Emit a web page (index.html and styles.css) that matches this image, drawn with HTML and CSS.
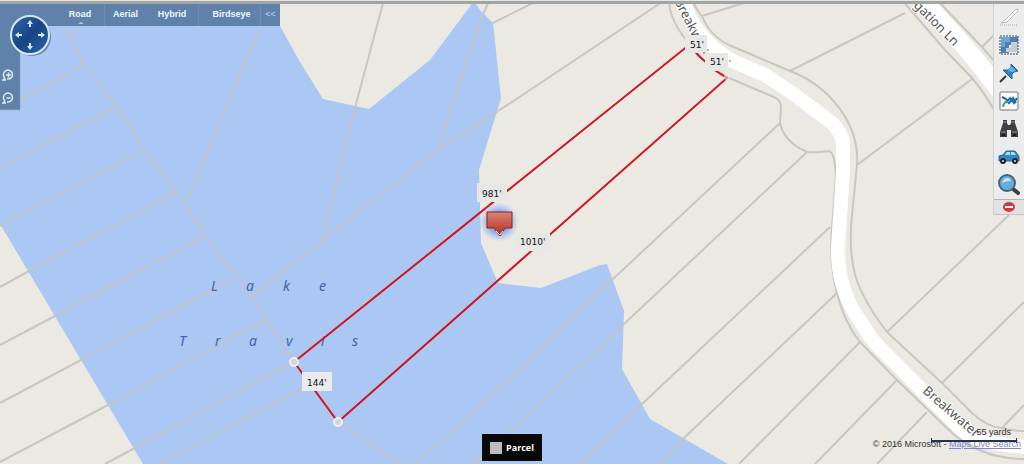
FILE: index.html
```html
<!doctype html>
<html lang="en">
  <head>
    <meta charset="utf-8">
    <title>Parcel map</title>
    <meta name="viewport" content="width=device-width, initial-scale=1">
    <link rel="stylesheet" href="styles.css">
  </head>
  <body>
    <main id="map">
      <svg class="canvas" viewBox="0 0 1024 464" preserveAspectRatio="xMidYMid slice" xmlns="http://www.w3.org/2000/svg">
        <defs>
          <linearGradient id="pin-fill" x1="0" y1="0" x2="0" y2="1">
            <stop offset="0" stop-color="#d98478" />
            <stop offset="1" stop-color="#b52a1c" />
          </linearGradient>
          <radialGradient id="pin-glow">
            <stop offset="0.5" stop-color="#7fa2f5" />
            <stop offset="1" stop-color="#a9c2f5" stop-opacity="0" />
          </radialGradient>
          <clipPath id="water-clip"><use href="#water" /></clipPath>
          <g id="lots">
            <path d="M64 26L84 65L118 107L143 148L183 201L205 236L252 296L267 322L295 362L338 422L402 464" />
            <path d="M75 36L80 26M84 65L20 101M118 106L0 168M142 151L0 226M177 192L29 271L0 287M206 236L55 316L0 345M232 280L81 360L0 403M265 320L108 405L0 462M290 364L133 449L105 464M302 389L160 464" />
            <path d="M259 30L187 201M383 3L355 108L323 240M252 296L320 243L432 154L495 113L512 102L665 0M488 3L480 22L438 148M493 23L535 2" />
            <path d="M780 123L613 279L512 377L415 464M807 152L624 324L512 430L473 464M830 227L641 405L579 464M837 293L685 437L659 464M860 342L739 464M897 380L815 464M927 412L877 464" />
            <path d="M702 16L747 2M790 71L905 13M857 165L972 79M887 332L1009 215M942 383L1024 302M1002 428L1024 405M982 47L994 35" />
          </g>
        </defs>

        <path id="water" class="water" d="M0 0H280V26L300 62L323 99L369 109L430 60L474 1L480 10L493 23L501 98L479 170L481 243L498 283L541 288L600 265L607 264L624 311L622 369L650 419L728 464H143L0 224Z" />
        <use href="#lots" class="lot" />
        <use href="#lots" class="lot lot-water" clip-path="url(#water-clip)" />

        <!-- road edges -->
        <path class="lot" d="M669 2Q670 16 679 30Q700 62 727 77L776 98Q781 101 781 107L780 123Q784 142 807 152Q815 153 829 151Q835 153 836 177L832 227Q829 262 837 293Q844 322 860 342L897 380L952 433Q966 445 979 450Q1000 459 1024 459" />
        <path class="lot" d="M693 2Q698 12 702 16Q710 36 729 45L790 71C830 86 860 125 857 165L852 215C847 265 855 290 887 332L942 383L972 413Q987 427 1002 428Q1012 431 1024 431" />
        <path class="lot" d="M902 0L945 50L972 78Q984 92 994 110M937 0L982 47L994 61" />
        <path class="road" d="M683 -2Q688 24 712 46Q726 58 735 62L765 75L795 95L832 123Q842 133 843 143V173L838 247Q837 290 861 322Q870 338 879 347L929 397L962 430Q978 444 1028 447" />
        <path class="road road-wide" d="M920 -4L963 45Q982 66 1004 97" />

        <text class="street" transform="translate(674 1) rotate(63)">Breakw</text>
        <text class="street" transform="translate(913 6) rotate(45)">gation Ln</text>
        <text class="street" transform="translate(922 392) rotate(41)">Breakwater</text>
        <text class="lake" x="211 246 283 319" y="291">Lake</text>
        <text class="lake" x="179 215 249 286 321 352" y="346">Travis</text>

        <!-- measured parcel -->
        <path class="parcel" d="M294 362L689 45L700 57L716 71L727 78L338 422Z" />
        <circle class="node" cx="294" cy="362" r="4" />
        <circle class="node" cx="338" cy="422" r="4" />
        <circle class="node node-faint" cx="727" cy="77" r="2" />

        <path class="tag" d="M685 35H707V53H685Z" />
        <text class="feet" x="690" y="48">51'</text>
        <path class="tag" d="M705 53H728V71H705Z" />
        <text class="feet" x="710" y="65">51'</text>
        <path class="speck" d="M703 53H705M708 49V51M729 61H731" />
        <path class="tag" d="M477 183H507V202H477Z" />
        <text class="feet" x="482" y="197">981'</text>
        <path class="tag" d="M515 232H550V251H515Z" />
        <text class="feet" x="520" y="245">1010'</text>
        <path class="tag tag-solid" d="M302 372H332V391H302Z" />
        <text class="feet" x="307" y="386">144'</text>

        <circle cx="499" cy="222" r="20" fill="url(#pin-glow)" />
        <path d="M487 212H512V228H505L500 236L494 228H487Z" fill="url(#pin-fill)" stroke="#8f2015" />
        <path d="M496 231L500 235L503 231" fill="none" stroke="#fff" />
      </svg>

      <nav class="modes">
        <button class="current">Road</button>
        <button class="aerial divided">Aerial</button>
        <button class="hybrid">Hybrid</button>
        <button class="birdseye divided">Birdseye</button>
        <button class="fold divided" aria-label="Collapse">&lt;&lt;</button>
      </nav>

      <div class="zoombar">
        <button aria-label="Zoom in">
          <svg class="glyph" viewBox="0 0 24 24"><path d="M6 18L2 22H8M6 18A9 9 0 1 1 10 20M13 7V17M8 12H18" /></svg>
        </button>
        <button aria-label="Zoom out">
          <svg class="glyph" viewBox="0 0 24 24"><path d="M6 18L2 22H8M6 18A9 9 0 1 1 10 20M9 12H17" /></svg>
        </button>
      </div>

      <button class="compass" aria-label="Pan">
        <svg viewBox="0 0 42 42">
          <defs>
            <linearGradient id="dial" x1="0" y1="0" x2="1" y2="1">
              <stop offset="0" stop-color="#3566ad" />
              <stop offset="0.5" stop-color="#174486" />
              <stop offset="1" stop-color="#2d66ae" />
            </linearGradient>
          </defs>
          <circle cx="23" cy="23" r="19" fill="#38567e" opacity="0.6" />
          <circle cx="21" cy="21" r="19" fill="url(#dial)" stroke="#d5e8f8" stroke-width="2" />
          <path d="M21 6L24 10H22V13H20V10H18ZM21 36L24 32H22V29H20V32H18ZM6 21L10 18V20H13V22H10V24ZM36 21L32 18V20H29V22H32V24Z" fill="#d2e9fb" />
        </svg>
      </button>

      <aside class="tools">
        <button aria-label="Draw line">
          <svg viewBox="0 0 22 22">
            <path d="M3 17L7 14L15 6Q17 3 20 3Q20 6 17 8L9 16Z" fill="#fff" stroke="#b9b9b9" />
            <path d="M2 19H20" stroke="#aaa" stroke-dasharray="1 1" />
          </svg>
        </button>
        <button aria-label="Select area">
          <svg viewBox="0 0 22 22">
            <path d="M3 3H20V11H11V19H3Z" fill="#4b80b5" />
            <path d="M3 3H12V8H7V13H3Z" fill="#71a3d2" />
            <path d="M13 8H20V18H8V14H13Z" fill="#c9cbd3" />
            <path d="M2 2H20V20H2Z" fill="none" stroke="#34495f" stroke-dasharray="2 1" />
          </svg>
        </button>
        <button aria-label="Pushpin">
          <svg viewBox="0 0 22 22">
            <path d="M8 14L2 20" stroke="#333" stroke-width="2" />
            <path d="M13 2L20 9L16 10L14 12L14 17L5 8L10 8L13 6Z" fill="#2b83c9" stroke="#1e659f" />
            <path d="M13 4L18 9L14 10L10 9Z" fill="#65b4e8" />
          </svg>
        </button>
        <button aria-label="Map layers">
          <svg viewBox="0 0 22 22">
            <rect x="2" y="2" width="18" height="18" rx="1" fill="#fafafa" stroke="#777" />
            <path d="M4 7L8 9L11 13L15 8L18 13M8 13L12 8L16 13L19 8" fill="none" stroke="#176da8" stroke-width="2" />
            <path d="M5 17Q6 11 10 12" fill="none" stroke="#46a35d" stroke-width="2" />
          </svg>
        </button>
        <button aria-label="Find nearby">
          <svg viewBox="0 0 22 22">
            <path d="M5 2H9V5L10 7H12L13 5V2H17V5L20 14V19H13V12H9V19H2V14L5 5Z" fill="#3e4043" />
            <path d="M5 4H9M13 4H17M3 14H8M14 14H19" stroke="#8a8f93" />
            <path d="M4 17H7M15 17H18" stroke="#17191c" stroke-width="2" />
          </svg>
        </button>
        <button aria-label="Directions">
          <svg viewBox="0 0 22 22">
            <path d="M1 10L5 9L8 5H17L20 9L21 11V15H1Z" fill="#2f87cc" stroke="#23669c" />
            <path d="M7 9L9 6H12V9ZM13 6H16L18 9H13Z" fill="#b9dcf3" />
            <circle cx="5" cy="15" r="2" fill="#ddd" stroke="#222" stroke-width="2" />
            <circle cx="17" cy="15" r="2" fill="#ddd" stroke="#222" stroke-width="2" />
          </svg>
        </button>
        <button aria-label="Search">
          <svg viewBox="0 0 22 22">
            <path d="M15 15L20 19" stroke="#3e3e3e" stroke-width="4" stroke-linecap="round" />
            <circle cx="9" cy="9" r="8" fill="#64aede" stroke="#4c6273" stroke-width="2" />
            <path d="M4 9Q5 4 10 4Q13 5 13 7Q8 7 4 9Z" fill="#c4e5f6" />
          </svg>
        </button>
        <button class="close" aria-label="Hide tools">
          <svg viewBox="0 0 12 12">
            <ellipse cx="6" cy="6" rx="6" ry="5" fill="#c93c43" />
            <path d="M2 6H10" stroke="#fff" stroke-width="2" />
          </svg>
        </button>
      </aside>

      <div class="legend"><i class="swatch"></i>Parcel</div>

      <footer class="credits">
        <span class="scale">55 yards</span>
        <p>© 2016 Microsoft - <a href="#">Maps Live Search</a></p>
      </footer>
    </main>
  </body>
</html>
```

FILE: styles.css
```css
* {
  margin: 0;
  padding: 0;
  box-sizing: border-box;
}

body {
  font-family: "Liberation Sans", Arial, sans-serif;
  font-size: 9px;
}

button {
  border: none;
  background: none;
  color: inherit;
  font: inherit;
  cursor: pointer;
}

#map {
  position: relative;
  height: 100vh;
  overflow: hidden;
  background: #ebe9e2;
}

#map::before {
  content: "";
  position: absolute;
  top: 0;
  left: 0;
  right: 0;
  height: 3px;
  z-index: 1;
  background: #a2a5a2;
  border-top: 1px solid #e4e6e4;
}

.canvas {
  display: block;
  width: 100%;
  height: 100%;
}

/* map drawing */

.water {
  fill: #abc7f3;
}

.lot {
  fill: none;
  stroke: #c8c7c3;
  stroke-width: 2;
}

.lot-water {
  stroke: #bbc4d3;
}

.road {
  fill: none;
  stroke: #fff;
  stroke-width: 14;
}

.road-wide {
  stroke-width: 18;
}

.street {
  font-family: "Noto Sans", sans-serif;
  font-size: 13px;
  fill: #555;
  stroke: #fff;
  stroke-width: 2px;
  paint-order: stroke;
}

.lake {
  font-family: "Noto Sans", sans-serif;
  font-size: 14px;
  font-style: italic;
  fill: #4264ac;
}

.parcel {
  fill: none;
  stroke: #d3141f;
  stroke-width: 2;
}

.node {
  fill: #d5d5d7;
  stroke: #eeeef0;
  stroke-width: 2;
}

.node-faint {
  opacity: 0.6;
}

.tag {
  fill: #e7e7e6;
}

.tag-solid {
  fill: #e9ebec;
}

.feet {
  font-family: "DejaVu Sans", sans-serif;
  font-size: 9px;
  fill: #111;
}

.speck {
  stroke: #666;
}

/* navigation */

.modes {
  position: absolute;
  top: 2px;
  left: 0;
  display: flex;
  width: 280px;
  height: 24px;
  padding-left: 56px;
  background: #5f81aa;
  color: #f0f6fc;
  font-weight: bold;
}

.modes button {
  position: relative;
}

.modes .divided {
  border-left: 1px solid #6d8db3;
}

.current {
  width: 48px;
}

.aerial {
  width: 42px;
}

.hybrid {
  width: 52px;
}

.birdseye {
  flex: 1;
  padding-left: 4px;
}

.fold {
  width: 20px;
  color: #c3d4e6;
  font-weight: normal;
}

.current::after {
  content: "";
  position: absolute;
  left: 22px;
  bottom: 2px;
  border: 3px solid transparent;
  border-top: none;
  border-bottom: 2px solid #b7cbdf;
}

.zoombar {
  position: absolute;
  top: 26px;
  left: 0;
  display: flex;
  flex-direction: column;
  width: 20px;
  padding: 37px 2px 0;
  background: #5f81aa;
  box-shadow: 0 1px 1px #7d93b4;
}

.zoombar button {
  height: 23px;
}

.glyph {
  display: block;
  width: 12px;
  height: 12px;
  fill: none;
  stroke: #dceafa;
  stroke-width: 3;
}

.compass {
  position: absolute;
  top: 14px;
  left: 9px;
  width: 42px;
  height: 42px;
}

.compass svg {
  display: block;
}

.tools {
  position: absolute;
  top: 2px;
  right: 0;
  display: flex;
  flex-direction: column;
  width: 31px;
  padding-top: 1px;
  background: #ececec;
  border-left: 1px solid #d2d2d2;
  border-bottom: 1px solid #c4c4c4;
}

.tools button {
  display: flex;
  align-items: center;
  justify-content: center;
  height: 28px;
}

.tools svg {
  width: 22px;
  height: 22px;
}

.tools .close {
  height: 15px;
  background: #e2e2e2;
  border-top: 1px solid #b4b4b4;
}

.tools .close svg {
  width: 12px;
  height: 12px;
}

.legend {
  position: absolute;
  left: 50%;
  bottom: 3px;
  transform: translateX(-50%);
  display: flex;
  align-items: center;
  justify-content: center;
  gap: 4px;
  width: 60px;
  height: 27px;
  background: #080808;
  color: #fff;
  font-family: "Open Sans", sans-serif;
  font-weight: bold;
}

.swatch {
  width: 12px;
  height: 12px;
  background: #bdbdbd;
}

.credits {
  position: absolute;
  right: 3px;
  bottom: 15px;
  color: #333;
  white-space: nowrap;
}

.credits a {
  color: #8088cc;
}

.scale {
  position: absolute;
  right: 4px;
  bottom: 6px;
  width: 86px;
  height: 16px;
  padding-right: 6px;
  text-align: right;
}

/* ruler under the distance */
.scale::after {
  content: "";
  position: absolute;
  left: 0;
  right: 0;
  bottom: 0;
  height: 5px;
  border: 1px solid #26304f;
  border-top: none;
  border-bottom: none;
  background: linear-gradient(#26304f, #26304f) 0 2px / 100% 2px no-repeat;
}
```
